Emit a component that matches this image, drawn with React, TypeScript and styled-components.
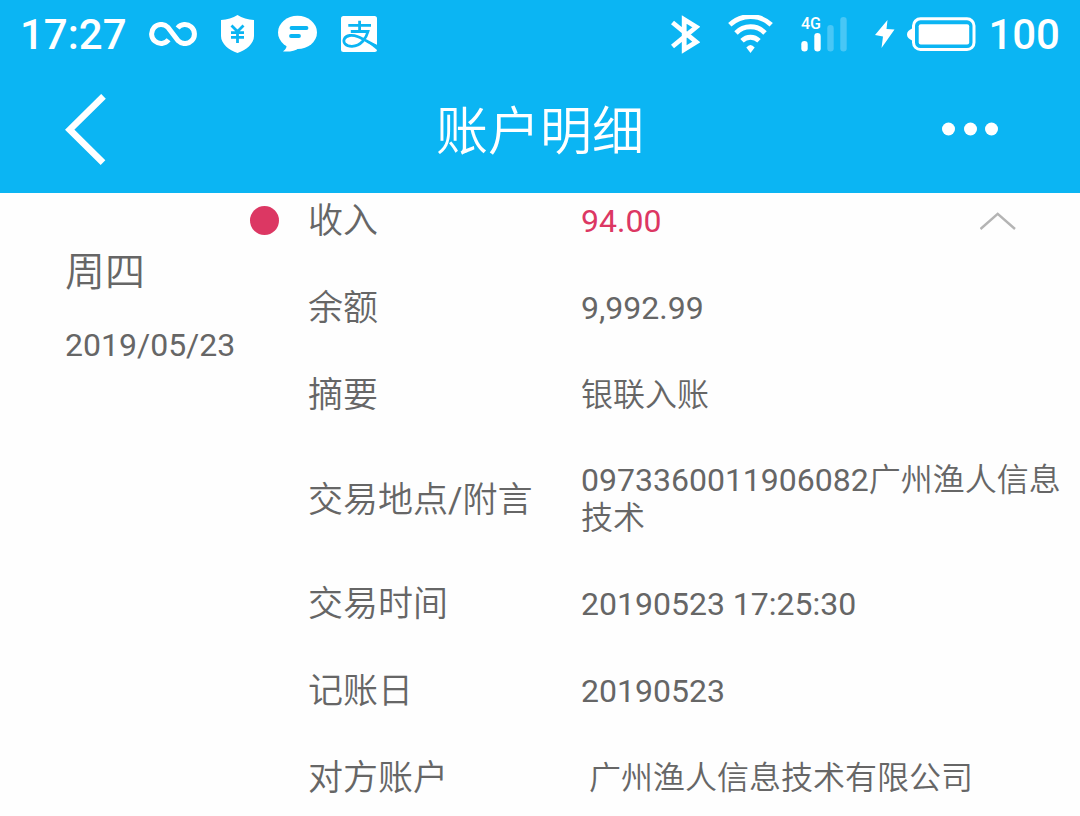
import React from "react";
import styled, { createGlobalStyle } from "styled-components";

const BLUE = "#0bb5f3";
const RED = "#dc3763";
const TEXT = "#666666";

const GlobalStyle = createGlobalStyle`
  * { box-sizing: border-box; }
  body {
    margin: 0;
    background: #fefefe;
    color: ${TEXT};
    font-family: Roboto, "Noto Sans CJK SC DemiLight", "Noto Sans CJK SC", sans-serif;
  }
  svg { display: block; flex: none; }
`;

const Header = styled.header`
  background: ${BLUE};
  color: #ffffff;
`;

const StatusBar = styled.div`
  display: flex;
  justify-content: space-between;
  align-items: center;
  height: 68px;
  padding: 0 20px;
`;

const StatusGroup = styled.div<{ $gap: number }>`
  display: flex;
  align-items: center;
  gap: ${(p) => p.$gap}px;
`;

const StatusText = styled.span`
  padding-top: 2px;
  font-size: 42px;
  font-weight: 500;
  line-height: 48px;
`;

const NavBar = styled.nav`
  display: grid;
  grid-template-columns: 1fr auto 1fr;
  align-items: center;
  height: 125px;
  padding: 0 82px 3px 65px;
`;

const IconButton = styled.button<{ $end?: boolean }>`
  display: flex;
  align-items: center;
  justify-self: ${(p) => (p.$end ? "end" : "start")};
  padding: 0;
  border: 0;
  background: none;
  color: inherit;
  cursor: pointer;
`;

const Title = styled.h1`
  margin: 0 0 0 17px;
  padding-bottom: 2px;
  font-family: "Noto Sans CJK SC DemiLight", "Noto Sans CJK SC", sans-serif;
  font-size: 52px;
  font-weight: 350;
  line-height: 72px;
`;

const Record = styled.main`
  display: grid;
  grid-template-columns: 250px minmax(0, 1fr);
  padding: 7px 16px 18px 0;
`;

const DateColumn = styled.section`
  display: flex;
  flex-direction: column;
  gap: 24px;
  padding: 49px 0 0 65px;
`;

const Weekday = styled.span`
  font-size: 40px;
  line-height: 48px;
`;

const DateText = styled.time`
  font-size: 32px;
  line-height: 48px;
  white-space: nowrap;
`;

const Details = styled.dl`
  display: flex;
  flex-direction: column;
  gap: 46px;
  margin: 0;
`;

const Row = styled.div<{ $marked?: boolean }>`
  display: grid;
  grid-template-columns: 58px 273px minmax(0, 1fr);
  align-items: center;

  &::before {
    content: "";
    width: 29px;
    height: 29px;
    border-radius: 50%;
    background: ${(p) => (p.$marked ? RED : "transparent")};
  }
`;

const Label = styled.dt`
  padding-top: 2px;
  font-size: 35px;
  line-height: 39px;
  white-space: nowrap;
`;

const Value = styled.dd<{ $accent?: boolean }>`
  display: flex;
  align-items: center;
  justify-content: space-between;
  margin: 0;
  font-size: 32px;
  line-height: 38px;
  color: ${(p) => (p.$accent ? RED : "inherit")};
`;

const ValueText = styled.span`
  white-space: pre-wrap;
`;

const CollapseButton = styled(IconButton)`
  margin-right: 48px;
  color: #b4b4b4;
`;

const InfinityIcon = () => (
  <svg width="48" height="24" viewBox="0 0 48 24" fill="none" stroke="currentColor" strokeWidth="5" aria-hidden="true">
    <path d="M19.6 17.8A9.5 9.5 0 1 1 18.8 5.2L29.2 18.8A9.5 9.5 0 1 0 28.6 6" />
  </svg>
);

const ShieldIcon = () => (
  <svg width="33" height="38" viewBox="0 0 33 38" aria-hidden="true">
    <path d="M16.5 0C12 3 6 4.8 0 5V21C0 29 8 35 16.5 38C25 35 33 29 33 21V5C27 4.8 21 3 16.5 0Z" fill="currentColor" />
    <path d="M10.5 10.5L16.5 16.5L22.5 10.5M10 17.7H23M10 22.4H23M16.5 16V28" fill="none" stroke={BLUE} strokeWidth="2.8" />
  </svg>
);

const ChatIcon = () => (
  <svg width="39" height="38" viewBox="0 0 39 38" aria-hidden="true">
    <ellipse cx="19.5" cy="17.4" rx="19.5" ry="16.6" fill="currentColor" />
    <path d="M8 28C9.5 32 8 34 5 36.5C12 37 17 36 21 33Z" fill="currentColor" />
    <path d="M13.5 13H28.5M13 21H21" stroke={BLUE} strokeWidth="3.8" strokeLinecap="round" />
  </svg>
);

const PayIcon = () => (
  <svg width="36" height="36" viewBox="0 0 36 36" aria-hidden="true">
    <rect width="36" height="36" rx="2.5" fill="currentColor" />
    <path
      d="M7.3 9.3H30M18.6 4.8V15.5M9.8 15.5H27C25.3 22 20 30 11 30.3C4.5 30.4 2 26.5 3.2 23.2C5 18.7 11.5 18.7 17 20.7C23 23 29.5 27.5 37 31"
      fill="none"
      stroke={BLUE}
      strokeWidth="2.8"
    />
    <path d="M24 24L36 29V34Z" fill={BLUE} />
  </svg>
);

const BluetoothIcon = () => (
  <svg width="29" height="39" viewBox="0 0 29 39" fill="none" stroke="currentColor" strokeWidth="4.8" aria-hidden="true">
    <path d="M1.5 7.5L25.3 27L13.2 34.5V4.5L25.3 12L1.5 31.5" />
  </svg>
);

const WifiIcon = () => (
  <svg width="45" height="38" viewBox="0 0 45 38" fill="none" stroke="currentColor" strokeWidth="4.8" aria-hidden="true">
    <path d="M1.8 9.8A30 30 0 0 1 43.2 9.8M8 18A20 20 0 0 1 37 18M14 25.8A12 12 0 0 1 31 25.8" />
    <path d="M18.3 32.5Q22.5 27.5 26.7 32.5L22.5 38Z" fill="currentColor" stroke="none" />
  </svg>
);

const SignalIcon = () => (
  <svg width="46" height="35" viewBox="0 0 46 35" overflow="visible" fill="currentColor" aria-hidden="true">
    <text x="0" y="12" fontSize="16" fontWeight="500" fontFamily="Roboto, sans-serif">4G</text>
    <rect x="0.3" y="24" width="6.4" height="10.5" rx="3.2" />
    <rect x="13.3" y="16" width="6.4" height="18.5" rx="3.2" />
    <rect x="26.3" y="8" width="6.4" height="26.5" rx="3.2" opacity="0.25" />
    <rect x="39.3" y="0" width="6.4" height="34.5" rx="3.2" opacity="0.25" />
  </svg>
);

const BoltIcon = () => (
  <svg width="20" height="28" viewBox="0 0 20 28" fill="currentColor" aria-hidden="true">
    <path d="M12.5 0L0 15L8 16.5L6.5 28L19.5 9.5L11.5 9Z" />
  </svg>
);

const BatteryIcon = () => (
  <svg width="69" height="35" viewBox="0 0 69 35" aria-hidden="true">
    <path d="M5 11.5C2 13 0 14.5 0 17.5C0 20.5 2 22 5 23.5Z" fill="currentColor" />
    <rect x="6.5" y="1.8" width="60.5" height="30.8" rx="7" fill="none" stroke="currentColor" strokeWidth="3" />
    <rect x="11.7" y="7.2" width="50.5" height="20.3" rx="2" fill="currentColor" />
  </svg>
);

const BackIcon = () => (
  <svg width="41" height="71" viewBox="0 0 41 71" fill="none" stroke="currentColor" strokeWidth="6.6" aria-hidden="true">
    <path d="M38.5 2.3L4.7 35.7L38 68.6" />
  </svg>
);

const MoreIcon = () => (
  <svg width="56" height="14" viewBox="0 0 56 14" fill="currentColor" aria-hidden="true">
    <circle cx="6.5" cy="7" r="6.5" />
    <circle cx="28.5" cy="7" r="6.5" />
    <circle cx="49.5" cy="7" r="6.5" />
  </svg>
);

const ChevronUpIcon = () => (
  <svg width="36" height="18" viewBox="0 0 36 18" fill="none" stroke="currentColor" strokeWidth="2.4" aria-hidden="true">
    <path d="M0.5 17L17.7 1.8L35 17" />
  </svg>
);

const entries = [
  { label: "收入", value: "94.00", income: true },
  { label: "余额", value: "9,992.99" },
  { label: "摘要", value: "银联入账" },
  { label: "交易地点/附言", value: "0973360011906082广州渔人信息技术" },
  { label: "交易时间", value: "20190523 17:25:30" },
  { label: "记账日", value: "20190523" },
  { label: "对方账户", value: " 广州渔人信息技术有限公司" },
];

export default function App() {
  return (
    <>
      <GlobalStyle />
      <Header>
        <StatusBar>
          <StatusGroup $gap={24}>
            <StatusGroup $gap={22}>
              <StatusText>17:27</StatusText>
              <InfinityIcon />
            </StatusGroup>
            <ShieldIcon />
            <ChatIcon />
            <PayIcon />
          </StatusGroup>
          <StatusGroup $gap={28}>
            <BluetoothIcon />
            <WifiIcon />
            <SignalIcon />
            <StatusGroup $gap={12}>
              <BoltIcon />
              <BatteryIcon />
              <StatusText>100</StatusText>
            </StatusGroup>
          </StatusGroup>
        </StatusBar>
        <NavBar>
          <IconButton type="button" aria-label="返回">
            <BackIcon />
          </IconButton>
          <Title>账户明细</Title>
          <IconButton type="button" aria-label="更多" $end>
            <MoreIcon />
          </IconButton>
        </NavBar>
      </Header>
      <Record>
        <DateColumn>
          <Weekday>周四</Weekday>
          <DateText dateTime="2019-05-23">2019/05/23</DateText>
        </DateColumn>
        <Details>
          {entries.map(({ label, value, income }) => (
            <Row key={label} $marked={income}>
              <Label>{label}</Label>
              <Value $accent={income}>
                <ValueText>{value}</ValueText>
                {income && (
                  <CollapseButton type="button" aria-label="收起">
                    <ChevronUpIcon />
                  </CollapseButton>
                )}
              </Value>
            </Row>
          ))}
        </Details>
      </Record>
    </>
  );
}
